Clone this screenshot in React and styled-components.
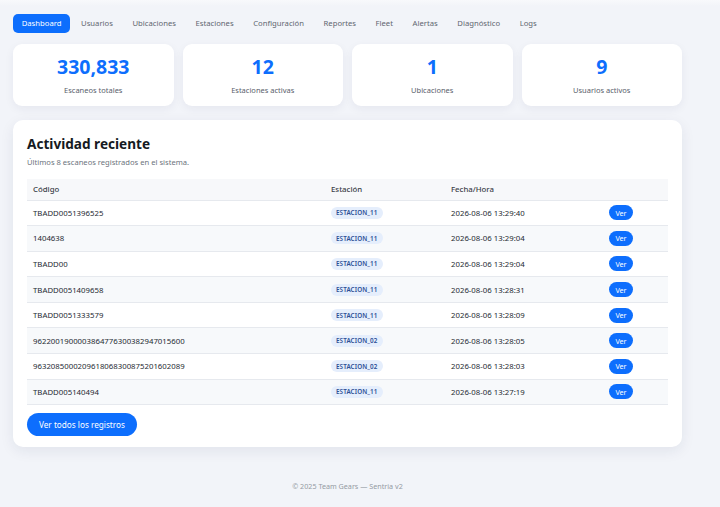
import React from 'react';
import styled, { createGlobalStyle } from 'styled-components';

const GlobalStyle = createGlobalStyle`
  html, body {
    margin: 0;
    padding: 0;
    background: #f2f4f9;
    font-family: "Noto Sans", "Open Sans", sans-serif;
    color: #212529;
  }
`;

const Page = styled.div`
  min-height: 507px;
  padding: 14px 38px 0 13px;
  box-sizing: border-box;
  background: linear-gradient(#f8f9fc 0, #f2f4f9 6px);
`;

const Nav = styled.nav`
  display: flex;
  align-items: center;
  gap: 2.2px;
`;

const NavLink = styled.a`
  font-size: 7.7px;
  padding: 0 8.7px;
  height: 19px;
  line-height: 19px;
  border-radius: 5px;
  text-decoration: none;
  color: ${(p) => (p.$active ? '#fff' : '#5f6670')};
  background: ${(p) => (p.$active ? '#0d6efd' : 'transparent')};
  white-space: nowrap;
`;

const Stats = styled.div`
  display: grid;
  grid-template-columns: repeat(4, 1fr);
  gap: 9px;
  margin-top: 11px;
`;

const StatCard = styled.div`
  background: #fff;
  border-radius: 9px;
  height: 62px;
  display: flex;
  flex-direction: column;
  align-items: center;
  justify-content: center;
  box-shadow: 0 3px 10px rgba(30, 40, 80, 0.06);
`;

const StatValue = styled.div`
  font-size: 19.5px;
  font-weight: 700;
  color: #0d6efd;
  line-height: 1;
  margin-top: 2px;
`;

const StatLabel = styled.div`
  font-size: 7.5px;
  color: #59606b;
  margin-top: 8px;
`;

const Panel = styled.section`
  background: #fff;
  border-radius: 10px;
  margin-top: 14px;
  padding: 14px 14px 11px;
  box-shadow: 0 4px 14px rgba(30, 40, 80, 0.08);
`;

const Title = styled.h2`
  margin: 0;
  font-size: 13.6px;
  font-weight: 700;
  color: #151a22;
  line-height: 20px;
`;

const Subtitle = styled.p`
  margin: 3px 0 0;
  font-size: 7.6px;
  color: #6c737d;
`;

const Table = styled.table`
  width: 100%;
  table-layout: fixed;
  border-collapse: collapse;
  margin-top: 12px;
  font-size: 7.8px;
`;

const Th = styled.th`
  text-align: left;
  font-weight: 500;
  color: #3b4048;
  background: #f7f8fa;
  height: 21px;
  padding: 0 6px;
  box-sizing: border-box;
  width: ${(p) => p.$w || 'auto'};
`;

const Row = styled.tr`
  background: ${(p) => (p.$striped ? '#f7f9fb' : '#fff')};
  border-top: 1px solid #e6e9ee;
  &:last-child {
    border-bottom: 1px solid #e6e9ee;
  }
`;

const Td = styled.td`
  height: 24.6px;
  padding: 0 6px;
  color: #262b33;
  vertical-align: middle;
  white-space: nowrap;
`;

const Badge = styled.span`
  display: inline-block;
  font-size: 6.3px;
  font-weight: 600;
  color: #2c4f96;
  background: #e5eefc;
  border-radius: 6px;
  padding: 1.5px 5px;
  letter-spacing: 0.1px;
`;

const SmallBtn = styled.button`
  border: none;
  background: #0d6efd;
  color: #fff;
  font-family: inherit;
  font-size: 7.2px;
  height: 15px;
  width: 24px;
  border-radius: 8px;
  padding: 0;
  cursor: pointer;
`;

const MainBtn = styled.button`
  margin-top: 8px;
  border: none;
  background: #0d6efd;
  color: #fff;
  font-family: inherit;
  font-size: 8.2px;
  height: 23px;
  padding: 0 12px;
  border-radius: 12px;
  cursor: pointer;
`;

const Footer = styled.footer`
  text-align: center;
  font-size: 7.2px;
  color: #959ba3;
  padding-top: 34px;
`;

const navItems = ['Dashboard', 'Usuarios', 'Ubicaciones', 'Estaciones', 'Configuración', 'Reportes', 'Fleet', 'Alertas', 'Diagnóstico', 'Logs'];

const stats = [
  { value: '330,833', label: 'Escaneos totales' },
  { value: '12', label: 'Estaciones activas' },
  { value: '1', label: 'Ubicaciones' },
  { value: '9', label: 'Usuarios activos' },
];

const scans = [
  ['TBADD0051396525', 'ESTACION_11', '2026-08-06 13:29:40'],
  ['1404638', 'ESTACION_11', '2026-08-06 13:29:04'],
  ['TBADD00', 'ESTACION_11', '2026-08-06 13:29:04'],
  ['TBADD0051409658', 'ESTACION_11', '2026-08-06 13:28:31'],
  ['TBADD0051333579', 'ESTACION_11', '2026-08-06 13:28:09'],
  ['9622001900003864776300382947015600', 'ESTACION_02', '2026-08-06 13:28:05'],
  ['9632085000209618068300875201602089', 'ESTACION_02', '2026-08-06 13:28:03'],
  ['TBADD005140494', 'ESTACION_11', '2026-08-06 13:27:19'],
];

const App = () => (
  <>
    <GlobalStyle />
    <Page>
      <Nav>
        {navItems.map((n, i) => (
          <NavLink key={n} href="#" $active={i === 0}>{n}</NavLink>
        ))}
      </Nav>

      <Stats>
        {stats.map((s) => (
          <StatCard key={s.label}>
            <StatValue>{s.value}</StatValue>
            <StatLabel>{s.label}</StatLabel>
          </StatCard>
        ))}
      </Stats>

      <Panel>
        <Title>Actividad reciente</Title>
        <Subtitle>Últimos 8 escaneos registrados en el sistema.</Subtitle>
        <Table>
          <thead>
            <tr>
              <Th $w="298px">Código</Th>
              <Th $w="120px">Estación</Th>
              <Th $w="158px">Fecha/Hora</Th>
              <Th />
            </tr>
          </thead>
          <tbody>
            {scans.map(([code, station, date], i) => (
              <Row key={i} $striped={i % 2 === 1}>
                <Td>{code}</Td>
                <Td><Badge>{station}</Badge></Td>
                <Td>{date}</Td>
                <Td><SmallBtn>Ver</SmallBtn></Td>
              </Row>
            ))}
          </tbody>
        </Table>
        <MainBtn>Ver todos los registros</MainBtn>
      </Panel>

      <Footer>© 2025 Team Gears — Sentria v2</Footer>
    </Page>
  </>
);

export default App;
